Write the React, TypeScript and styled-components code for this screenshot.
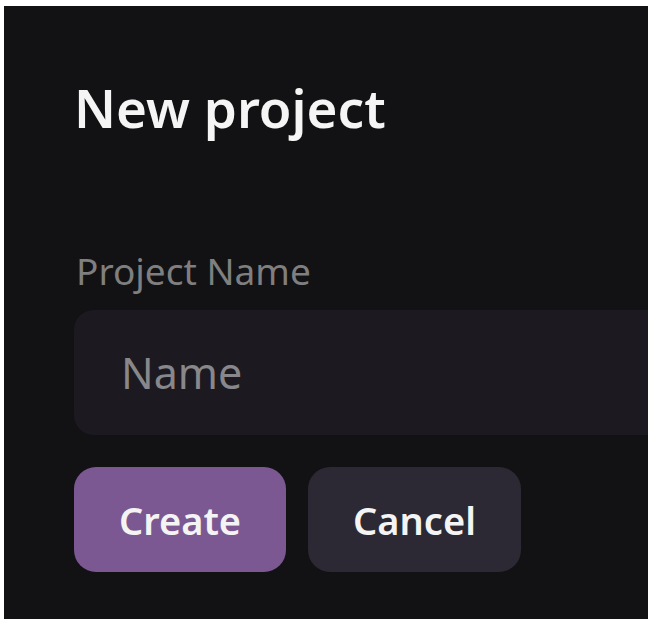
import React from 'react';
import styled, { createGlobalStyle } from 'styled-components';

const GlobalStyle = createGlobalStyle`
  html, body {
    margin: 0;
    padding: 0;
    background: #ffffff;
    overflow: hidden;
  }
  body {
    font-family: 'Noto Sans', 'Open Sans', sans-serif;
  }
`;

const Panel = styled.div`
  margin: 6px 0 0 4px;
  height: 613px;
  box-sizing: border-box;
  padding: 75px 0 0 70px;
  background: #121214;
  overflow: hidden;
`;

const Title = styled.h1`
  margin: 0;
  font-size: 53px;
  line-height: 1;
  font-weight: 600;
  color: #f5f5f5;
`;

const Field = styled.div`
  display: flex;
  flex-direction: column;
  gap: 21px;
  margin-top: 118px;
  width: 640px;
`;

const Label = styled.label`
  font-size: 37px;
  line-height: 1;
  color: #7f7f80;
  padding-left: 2px;
`;

const Input = styled.input`
  height: 125px;
  box-sizing: border-box;
  border: none;
  outline: none;
  border-radius: 20px;
  background: #1c1a20;
  padding: 0 0 0 47px;
  font-family: inherit;
  font-size: 43px;
  color: #e8e8e8;

  &::placeholder {
    color: #88878b;
  }
`;

const ButtonRow = styled.div`
  display: flex;
  gap: 22px;
  margin-top: 32px;
`;

const Button = styled.button<{ $primary?: boolean }>`
  height: 105px;
  padding: 0 45px;
  border: none;
  border-radius: 22px;
  background: ${({ $primary }) => ($primary ? '#7b5892' : '#2d2934')};
  color: #f4f4f4;
  font-family: inherit;
  font-size: 38px;
  font-weight: 600;
  cursor: pointer;
`;

const App: React.FC = () => {
  return (
    <>
      <GlobalStyle />
      <Panel>
        <Title>New project</Title>
        <Field>
          <Label htmlFor="project-name">Project Name</Label>
          <Input id="project-name" placeholder="Name" />
        </Field>
        <ButtonRow>
          <Button $primary>Create</Button>
          <Button>Cancel</Button>
        </ButtonRow>
      </Panel>
    </>
  );
};

export default App;
